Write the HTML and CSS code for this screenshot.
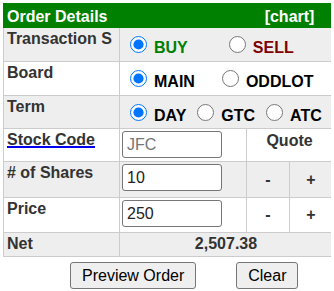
FILE: index.html
```html
<!DOCTYPE html>
<html lang="en">
  <head>
    <meta charset="UTF-8" />
    <meta name="viewport" content="width=device-width, initial-scale=1.0" />
    <title>Order Details</title>
    <link rel="stylesheet" href="styles.css">
  </head>
  <body>
    <table class="order">
      <colgroup>
        <col class="col-label" />
        <col class="col-input" />
        <col class="col-step" />
        <col class="col-step" />
      </colgroup>
      <tr class="head">
        <th colspan="2" class="title">Order Details</th>
        <th colspan="2" class="chart">[chart]</th>
      </tr>
      <tr class="alt side-row">
        <td class="label">Transaction S</td>
        <td colspan="3" class="opts">
          <label class="opt"><input type="radio" name="side" checked /><span class="buy">BUY</span></label><label class="opt gap-lg"><input type="radio" name="side" /><span class="sell">SELL</span></label>
        </td>
      </tr>
      <tr class="board-row">
        <td class="label">Board</td>
        <td colspan="3" class="opts">
          <label class="opt"><input type="radio" name="board" checked /><span>MAIN</span></label><label class="opt gap-md"><input type="radio" name="board" /><span>ODDLOT</span></label>
        </td>
      </tr>
      <tr class="alt term-row">
        <td class="label">Term</td>
        <td colspan="3" class="opts">
          <label class="opt"><input type="radio" name="term" checked /><span>DAY</span></label><label class="opt gap-sm"><input type="radio" name="term" /><span>GTC</span></label><label class="opt gap-sm"><input type="radio" name="term" /><span>ATC</span></label>
        </td>
      </tr>
      <tr class="code-row">
        <td class="label"><a href="#" class="code-link">Stock Code</a></td>
        <td class="field"><input type="text" placeholder="JFC" /></td>
        <td colspan="2" class="quote">Quote</td>
      </tr>
      <tr class="alt qty-row">
        <td class="label"># of Shares</td>
        <td class="field"><input type="text" value="10" /></td>
        <td class="step">-</td>
        <td class="step">+</td>
      </tr>
      <tr class="price-row">
        <td class="label">Price</td>
        <td class="field"><input type="text" value="250" /></td>
        <td class="step">-</td>
        <td class="step">+</td>
      </tr>
      <tr class="alt net-row">
        <td class="label">Net</td>
        <td colspan="3" class="net">2,507.38</td>
      </tr>
    </table>

    <div class="actions">
      <button>Preview Order</button>
      <button>Clear</button>
    </div>
  </body>
</html>
```

FILE: styles.css
```css
* {
  box-sizing: border-box;
}
body {
  margin: 3px;
  font-family: "Liberation Sans", Arial, sans-serif;
  font-size: 16px;
  background: white;
}

.order {
  width: 330px;
  table-layout: fixed;
  border-collapse: collapse;
  color: #333;
  font-weight: bold;
}
.col-label {
  width: 116px;
}
.col-input {
  width: 127px;
}
.col-step {
  width: 43px;
}

/* row heights */
.head {
  height: 24px;
}
.side-row,
.board-row {
  height: 34px;
}
.term-row,
.code-row {
  height: 33px;
}
.qty-row {
  height: 36px;
}
.price-row {
  height: 35px;
}
.net-row {
  height: 24px;
}

.order td {
  border: 1px solid #ccc;
  padding: 2px 3px;
  vertical-align: top;
}
.order tr.alt td {
  background: #eee;
}

.head th {
  background: #008000;
  border: 1px solid #008000;
  color: white;
  padding: 3px 3px 1px;
  text-align: left;
}
.head th.chart {
  text-align: center;
}

.order td.label {
  white-space: nowrap;
  overflow: hidden;
}

.order td.opts {
  padding: 8px 3px 2px 10px;
  color: black;
}
.opt {
  white-space: nowrap;
}
.opt input {
  width: 17px;
  height: 17px;
  margin: 0 7px 2px 0;
}
.gap-lg {
  margin-left: 41px;
}
.gap-md {
  margin-left: 27px;
}
.gap-sm {
  margin-left: 11px;
}
.buy {
  color: #008000;
}
.sell {
  color: #800000;
}

.code-link {
  color: #333;
  text-decoration-color: #0000ee;
  text-decoration-thickness: 2px;
}

.order td.field {
  padding: 2px 2px 3px;
}
.field input {
  width: 100px;
  height: 27px;
  padding: 0 4px;
  border: 1px solid #767676;
  border-radius: 3px;
  font-family: "Liberation Sans", Arial, sans-serif;
  font-size: 16px;
  color: #222;
}

.order td.quote {
  text-align: center;
  padding-top: 3px;
}
.order td.step {
  text-align: center;
  vertical-align: middle;
  padding: 2px 0;
}
.order td.net {
  text-align: center;
}

.actions {
  display: flex;
  gap: 40px;
  margin-top: 5px;
  padding-left: 67px;
}
.actions button {
  height: 27px;
  padding: 0 11px;
  font-family: "Liberation Sans", Arial, sans-serif;
  font-size: 16px;
  color: black;
  background: #efefef;
  border: 1px solid #767676;
  border-radius: 3px;
}
```
